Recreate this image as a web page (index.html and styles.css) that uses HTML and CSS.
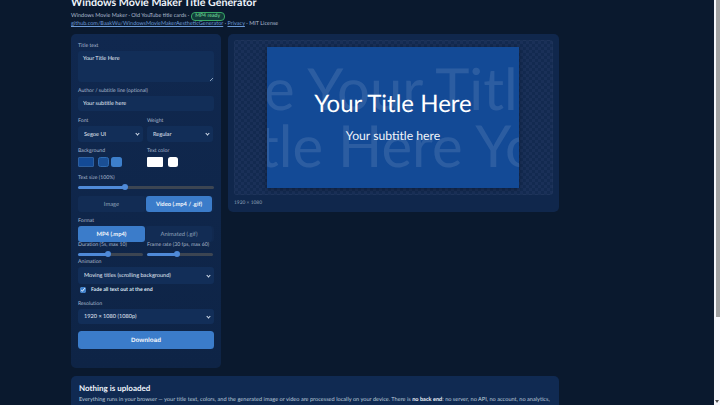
FILE: index.html
```html
<!DOCTYPE html>
<html lang="en">
<head>
  <meta charset="UTF-8" />
  <meta name="viewport" content="width=device-width, initial-scale=1" />
  <title>Windows Movie Maker Title Generator</title>
  <link rel="stylesheet" href="styles.css">
</head>
<body>

  <div class="page">

    <!-- Header -->
    <header class="header">
      <h1>Windows Movie Maker Title Generator</h1>
      <p>Windows Movie Maker · Old YouTube title cards · <span class="badge">MP4 ready</span></p>
      <p><a href="#">github.com/BaakWu/WindowsMovieMakerAestheticGenerator</a> · <a href="#">Privacy</a> · MIT License</p>
    </header>

    <div class="columns">

      <!-- Controls -->
      <form class="panel">
        <label class="field first">
          <span class="label">Title text</span>
          <span class="area-wrap">
            <textarea class="control area">Your Title Here</textarea>
          </span>
        </label>

        <label class="field">
          <span class="label">Author / subtitle line (optional)</span>
          <input class="control text" type="text" value="Your subtitle here" />
        </label>

        <div class="two gap-6">
          <label class="field-in">
            <span class="label">Font</span>
            <span class="select-wrap"><select class="control"><option>Segoe UI</option></select></span>
          </label>
          <label class="field-in">
            <span class="label">Weight</span>
            <span class="select-wrap"><select class="control"><option>Regular</option></select></span>
          </label>
        </div>

        <div class="two">
          <div class="field-in">
            <span class="label">Background</span>
            <div class="swatches">
              <span class="swatch wide bg-1"></span>
              <span class="swatch round bg-2"></span>
              <span class="swatch round bg-3"></span>
            </div>
          </div>
          <div class="field-in">
            <span class="label">Text color</span>
            <div class="swatches big-gap">
              <span class="swatch wide white"></span>
              <span class="swatch round white"></span>
            </div>
          </div>
        </div>

        <label class="field seven">
          <span class="label">Text size (100%)</span>
          <input class="range" type="range" min="0" max="100" value="34" style="--v: 34%" />
        </label>

        <div class="tabs">
          <button type="button" class="tab">Image</button>
          <button type="button" class="tab on">Video (.mp4 / .gif)</button>
        </div>

        <div class="field">
          <span class="label">Format</span>
          <div class="tabs flush">
            <button type="button" class="tab on">MP4 (.mp4)</button>
            <button type="button" class="tab">Animated (.gif)</button>
          </div>
        </div>

        <div class="two tight">
          <label class="field-in">
            <span class="label">Duration (5s, max 10)</span>
            <input class="range" type="range" min="0" max="100" value="45" style="--v: 45%" />
          </label>
          <label class="field-in">
            <span class="label">Frame rate (30 fps, max 60)</span>
            <input class="range" type="range" min="0" max="100" value="45" style="--v: 45%" />
          </label>
        </div>

        <label class="field tight">
          <span class="label">Animation</span>
          <span class="select-wrap"><select class="control tall"><option>Moving titles (scrolling background)</option></select></span>
        </label>

        <label class="check">
          <input type="checkbox" checked />
          <span>Fade all text out at the end</span>
        </label>

        <label class="field six">
          <span class="label">Resolution</span>
          <span class="select-wrap"><select class="control short"><option>1920 × 1080 (1080p)</option></select></span>
        </label>

        <button type="button" class="download">Download</button>
      </form>

      <!-- Preview -->
      <section class="preview">
        <div class="stage">
          <div class="canvas">
            <div class="ghost row-1">Your Title Here Your Title Here</div>
            <div class="ghost row-2">Your Title Here Your Title Here</div>
            <div class="main-title">Your Title Here</div>
            <div class="sub-title">Your subtitle here</div>
          </div>
        </div>
        <div class="size">1920 × 1080</div>
      </section>

    </div>

    <!-- Notice -->
    <section class="notice">
      <h2>Nothing is uploaded</h2>
      <p>Everything runs in your browser — your title text, colors, and the generated image or video are processed locally on your device. There is <b>no back end</b>: no server, no API, no account, no analytics,</p>
    </section>

  </div>

  <div class="scrollbar">
    <div class="thumb"></div>
    <div class="arrow"></div>
  </div>

</body>
</html>
```

FILE: styles.css
```css
/* Reset */
* {
  margin: 0;
  padding: 0;
  box-sizing: border-box;
}
html, body {
  height: 405px;
  overflow: hidden;
}
body {
  display: flex;
  font-family: "Lato", "Noto Sans", sans-serif;
  text-rendering: geometricPrecision;
  background: #0a192e;
  color: #dce6f3;
}

.page {
  flex: 1;
  padding-left: 71px;
  height: 405px;
  overflow: hidden;
}

/* Header */
.header {
  width: 488px;
  height: 38px;
  margin-top: -4px;
}
.header h1 {
  font-size: 10.7px;
  line-height: 14px;
  font-weight: 700;
  color: #eef3fa;
  margin-bottom: 2px;
}
.header p {
  height: 8px;
  font-size: 5.5px;
  line-height: 8px;
  color: #aebdd1;
  white-space: nowrap;
}
.header a {
  color: #6c9ad6;
}
.badge {
  display: inline-block;
  font-size: 5.2px;
  line-height: 6.5px;
  padding: 0 3.5px;
  border: 0.6px solid #37a866;
  border-radius: 4px;
  background: #123c3a;
  color: #7fe3a3;
  vertical-align: top;
}

.columns {
  display: grid;
  grid-template-columns: 150px 331px;
  gap: 7px;
  align-items: start;
}

/* Left panel */
.panel {
  height: 334px;
  padding: 8px 7px 20px;
  background: linear-gradient(180deg, #10284f 0%, #0e2446 100%);
  border-radius: 5px;
}
.field {
  display: block;
  margin-top: 5px;
}
.field.first {
  margin-top: 0;
}
.field.tight {
  margin-top: 0;
}
.field.seven {
  margin-top: 7px;
}
.field.six {
  margin-top: 6px;
}
.label {
  display: block;
  height: 8px;
  margin-bottom: 1px;
  font-size: 5.2px;
  line-height: 8px;
  color: #a9b9ce;
  white-space: nowrap;
}
.control {
  display: block;
  width: 100%;
  border: none;
  outline: none;
  background: #122e58;
  color: #e3ebf6;
  font-family: inherit;
  font-size: 5.6px;
  text-rendering: geometricPrecision;
  border-radius: 3px;
  padding: 0 5px;
}
.area-wrap {
  display: block;
  position: relative;
}
.area-wrap::after {
  content: "";
  position: absolute;
  right: 1px;
  bottom: 1px;
  width: 3px;
  height: 3px;
  background: linear-gradient(135deg, transparent 45%, #8fa3bd 50%, transparent 60%, transparent 70%, #8fa3bd 75%, transparent 85%);
}
.area {
  height: 31px;
  padding: 4px 5px;
  line-height: 8px;
  resize: none;
}
.text {
  height: 15px;
}
.select-wrap {
  display: block;
  position: relative;
}
.select-wrap select {
  appearance: none;
  height: 16px;
  padding-left: 6px;
}
.select-wrap select.tall {
  height: 17px;
}
.select-wrap select.short {
  height: 15px;
}
.select-wrap::after {
  content: "";
  position: absolute;
  right: 4px;
  top: 50%;
  width: 2px;
  height: 2px;
  margin-top: -2px;
  border-right: 0.8px solid #d5dfec;
  border-bottom: 0.8px solid #d5dfec;
  transform: rotate(45deg);
  pointer-events: none;
}

.two {
  display: grid;
  grid-template-columns: 65px 66px;
  gap: 4px;
  margin-top: 5px;
}
.two.gap-6 {
  margin-top: 6px;
}
.two.tight {
  margin-top: -1px;
}
.field-in {
  display: block;
  min-width: 0;
}

/* Swatches */
.swatches {
  display: flex;
  gap: 2px;
  margin-top: 2px;
  height: 10px;
}
.swatches.big-gap {
  gap: 5px;
}
.swatch {
  display: block;
  height: 10px;
  border-radius: 1px;
}
.swatch.wide {
  width: 16px;
}
.swatch.round {
  width: 11px;
  border-radius: 2.5px;
}
.big-gap .swatch.round {
  width: 10px;
}
.bg-1 {
  background: #134a96;
  border: 0.5px solid #2d5f9f;
  margin-right: 2px;
}
.bg-2 {
  background: #1a4f95;
  border: 0.5px solid #2f6cb3;
}
.bg-3 {
  background: #3d7fcb;
}
.white {
  background: #fff;
}

/* Sliders */
.range {
  display: block;
  appearance: none;
  width: 100%;
  height: 8px;
  background: transparent;
  outline: none;
}
.range::-webkit-slider-runnable-track {
  height: 3px;
  border-radius: 2px;
  background: linear-gradient(90deg, #4f8ad8 var(--v), #3c4552 var(--v));
}
.range::-webkit-slider-thumb {
  appearance: none;
  width: 6px;
  height: 6px;
  margin-top: -1.5px;
  border-radius: 50%;
  background: #4f8ad8;
}

/* Tabs */
.tabs {
  display: grid;
  grid-template-columns: 67px 66px;
  gap: 1px;
  margin-top: 5px;
  background: #11294f;
  border-radius: 3px;
}
.tabs.flush {
  margin-top: 0;
}
.tab {
  height: 16px;
  border: none;
  border-radius: 3px;
  background: #122c54;
  color: #8fa2ba;
  font-family: inherit;
  font-size: 5.8px;
  text-rendering: geometricPrecision;
}
.tab.on {
  background: #3b7cca;
  color: #f2f6fb;
  font-weight: 700;
}

/* Checkbox */
.check {
  display: flex;
  align-items: center;
  gap: 5px;
  height: 8px;
  margin-top: 2px;
  padding-left: 2px;
  font-size: 5.2px;
  font-weight: 700;
  color: #dce6f3;
}
.check input {
  width: 6px;
  height: 6px;
  accent-color: #3d7fcb;
}

.download {
  display: block;
  width: 100%;
  height: 18px;
  margin-top: 7px;
  border: none;
  border-radius: 3.5px;
  background: #3b7cca;
  color: #eef3fa;
  font-family: "Liberation Sans", sans-serif;
  font-size: 6.3px;
  font-weight: 700;
  text-rendering: geometricPrecision;
}

/* Preview */
.preview {
  height: 178px;
  padding: 6px;
  background: #10274c;
  border-radius: 5px;
}
.stage {
  width: 319px;
  height: 155px;
  padding: 6px 0 0 32px;
  border: 1px solid rgba(255, 255, 255, 0.025);
  border-radius: 3px;
  background-color: #152c52;
  background-image: conic-gradient(#1a3058 25%, #132a50 0 50%, #1a3058 0 75%, #132a50 0);
  background-size: 6px 6px;
}
.canvas {
  position: relative;
  width: 252px;
  height: 141px;
  overflow: hidden;
  background: #134a96;
  box-shadow: 0 1px 5px rgba(0, 0, 0, 0.35);
}
.ghost {
  position: absolute;
  white-space: nowrap;
  font-size: 58px;
  line-height: 57px;
  color: rgba(255, 255, 255, 0.11);
}
.row-1 {
  top: 13px;
  left: -353px;
}
.row-2 {
  top: 70px;
  left: -185px;
}
.main-title {
  position: absolute;
  left: 0;
  right: 0;
  top: 39px;
  text-align: center;
  font-size: 24px;
  line-height: 36px;
  color: #fff;
}
.sub-title {
  position: absolute;
  left: 0;
  right: 0;
  top: 79px;
  text-align: center;
  font-size: 12.2px;
  line-height: 20px;
  color: #f0f4fa;
}
.size {
  margin-top: 4px;
  font-size: 4.9px;
  line-height: 8px;
  color: #8fa2ba;
}

/* Notice */
.notice {
  width: 488px;
  height: 40px;
  margin-top: 8px;
  padding: 8px 8px 0;
  background: #102a52;
  border-radius: 5px;
}
.notice h2 {
  font-size: 8px;
  line-height: 9px;
  font-weight: 700;
  color: #eef3fa;
  margin-bottom: 3px;
}
.notice p {
  font-size: 5.6px;
  line-height: 8px;
  color: #bccadb;
  white-space: nowrap;
}
.notice b {
  color: #eef3fa;
}

/* Scrollbar */
.scrollbar {
  display: flex;
  flex-direction: column;
  justify-content: space-between;
  align-items: flex-end;
  width: 6px;
  height: 405px;
  background: #f7f7fb;
}
.thumb {
  width: 4px;
  height: 317px;
  background: #a3a3a3;
}
.arrow {
  width: 0;
  height: 0;
  margin: 0 1px 2px 0;
  border-left: 2px solid transparent;
  border-right: 2px solid transparent;
  border-top: 3px solid #555;
}
```
